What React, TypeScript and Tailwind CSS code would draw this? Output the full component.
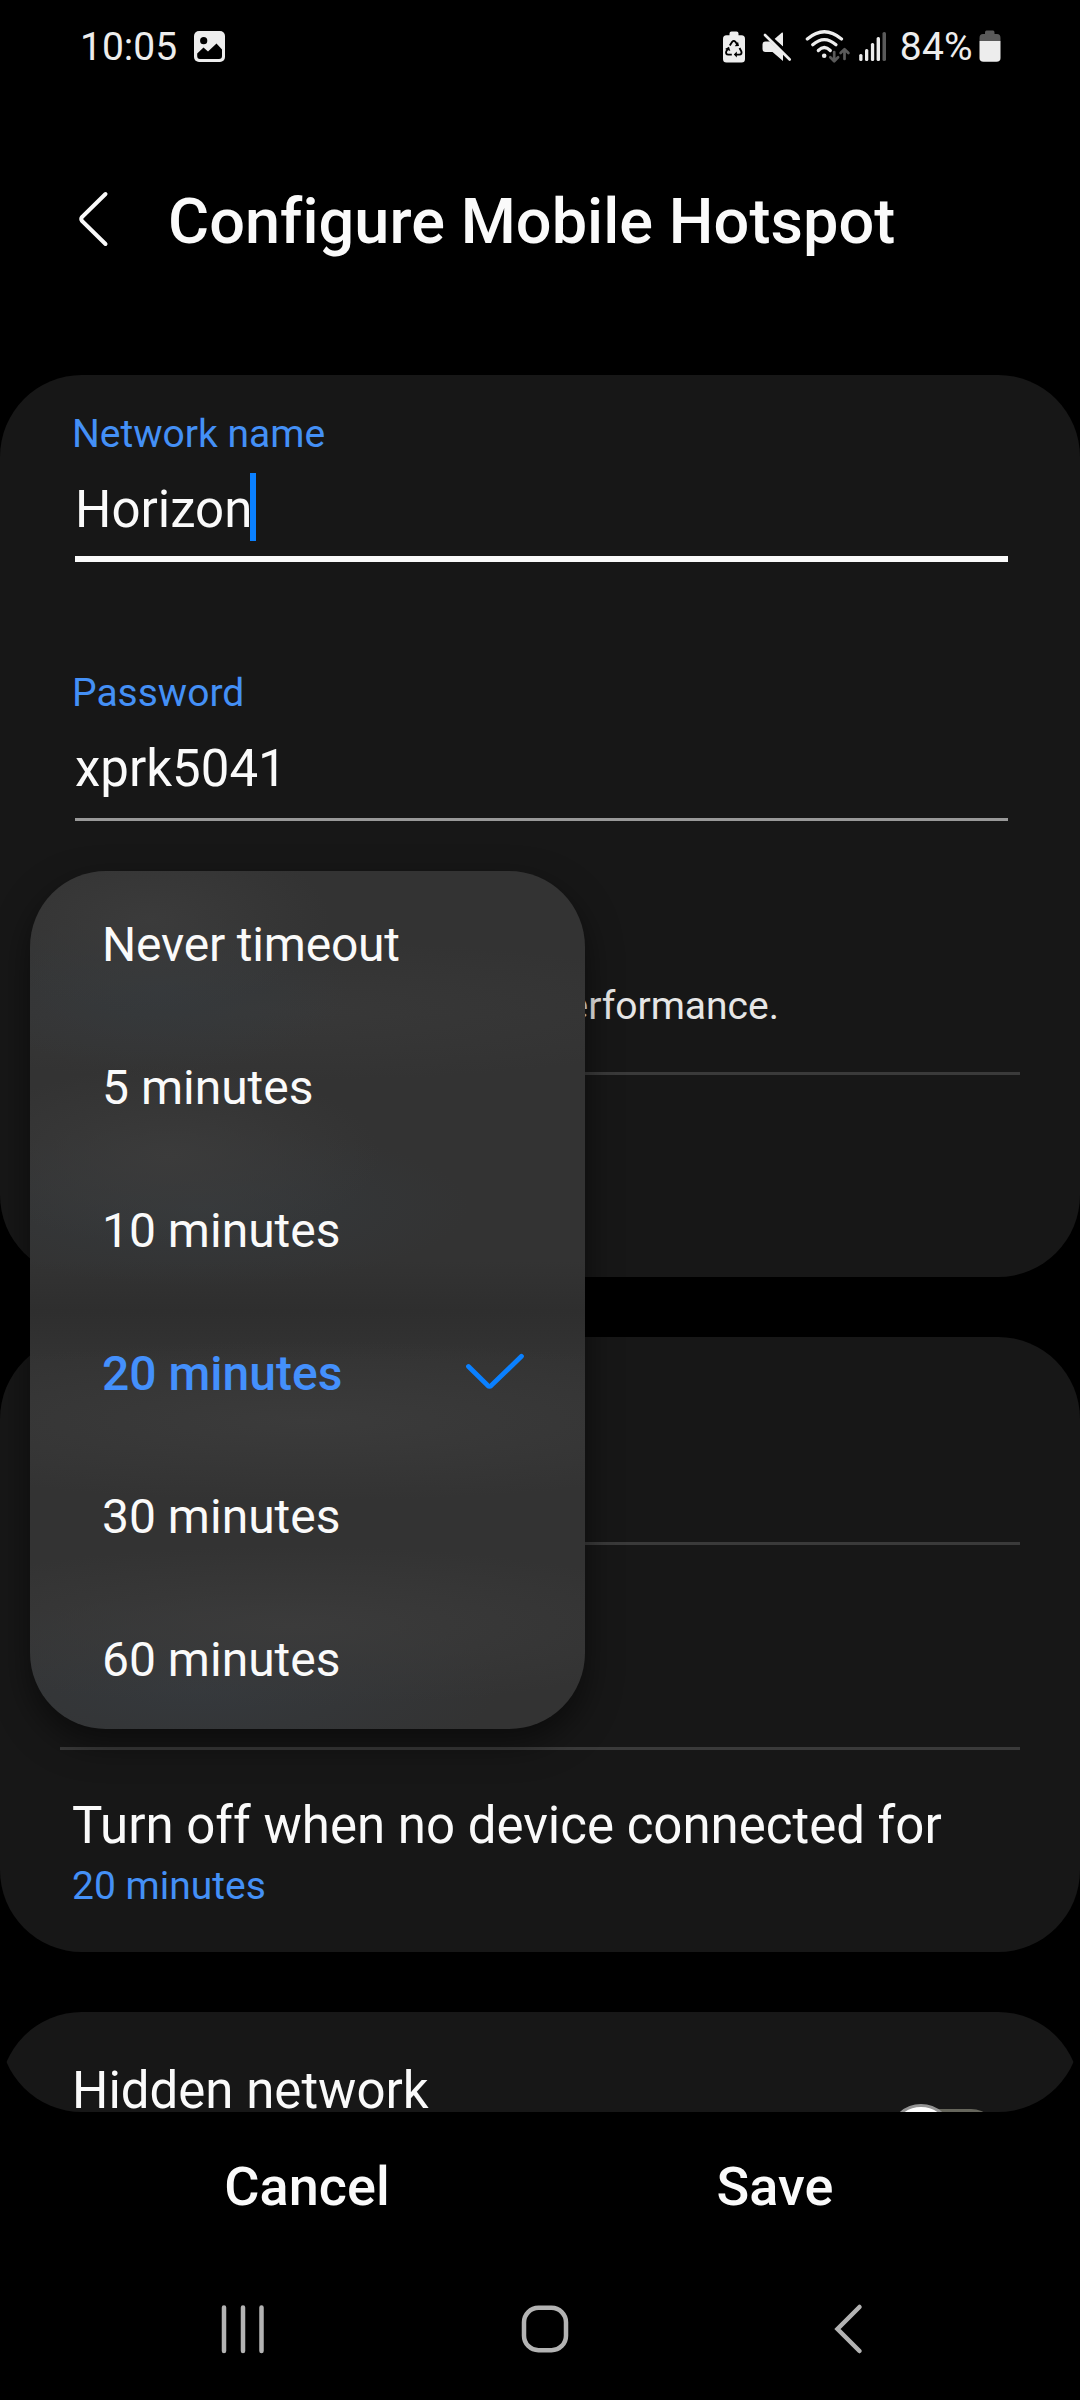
import React from "react";

const options = ["Never timeout", "5 minutes", "10 minutes", "20 minutes", "30 minutes", "60 minutes"];
const selected = "20 minutes";

function Battery() {
  return (
    <svg className="block h-[32px] w-[22px]" viewBox="0 0 22 32">
      <path d="M6 4V2.500Q6 .500 7.500 .500H14Q15.500 .500 15.500 2.500V4H18Q21.500 4 21.500 8V11H.500V8Q.500 4 4 4Z" fill="#5a5a5a" />
      <path d="M.500 11H21.500V28Q21.500 31.800 17.500 31.800H4.500Q.500 31.800 .500 28Z" fill="#ededed" />
    </svg>
  );
}

function StatusBar() {
  return (
    <header className="flex h-[92px] items-center pl-[80px] pr-[79px] text-[39px] text-[#ededed]">
      <span className="mt-[2px] w-[114px]">10:05</span>
      <svg className="h-[31px] w-[31px]" viewBox="0 0 31 31">
        <rect width="31" height="31" rx="5" fill="#ededed" />
        <circle cx="9.700" cy="9.700" r="3.600" fill="#000" />
        <path d="M3.200 22.500L9.500 16.500L14 20.500L22.500 12.500L28 18.500V25Q28 28 25 28H6Q3.200 28 3.200 25Z" fill="#000" />
      </svg>
      <svg className="ml-auto h-[44px] w-[180px]" viewBox="0 0 180 44">
        {/* battery protection */}
        <path d="M11.500 9.500Q11.500 7.500 13.500 7.500H18.500Q20.500 7.500 20.500 9.500V11.300H23.500Q27 11.300 27 15V35Q27 38.600 23.500 38.600H8.500Q5 38.600 5 35V15Q5 11.300 8.500 11.300H11.500Z" fill="#ededed" />
        <path d="M11.800 21.500L14.200 17.800Q15.800 16 17.400 17.800L19.200 20.500M21.500 24L23.300 27.300Q24.300 30.600 21.300 30.600H18M13.800 30.600H10.300Q7.300 30.600 8.300 27.300L10 24.500" fill="none" stroke="#000" strokeWidth="1.900" />
        <path d="M16.800 22.300L21 22L20 17.800ZM18.800 27.600L15.800 30.600L18.800 33.400ZM7 25L11 22.800L12.300 27Z" fill="#000" />
        {/* muted speaker */}
        <path d="M47.500 17.500H52L65 30V37L54.500 28H47.500Q44.500 28 44.500 25V20.500Q44.500 17.500 47.500 17.500Z" fill="#ededed" />
        <path d="M56.500 15L64 8.500Q65 8 65 9.500V22.500Z" fill="#ededed" />
        <path d="M48.500 9L73.500 33.500" stroke="#000" strokeWidth="3" />
        <path d="M47 11L71.700 35.500" stroke="#ededed" strokeWidth="2.700" strokeLinecap="round" />
        {/* wifi with data arrows */}
        <g fill="none" stroke="#ededed" strokeWidth="3.200" strokeLinecap="round">
          <path d="M89.300 15Q106.300 .500 123.500 15" />
          <path d="M94.700 20.800Q106.300 10.500 118 20.800" />
          <path d="M100.300 26.500Q106.300 20.500 112.300 26.500" />
        </g>
        <circle cx="106.200" cy="31.700" r="2.300" fill="#ededed" />
        <path d="M116.200 28V37M112.300 33.300L116.200 37.200L120.100 33.300M126.500 35V26M122.600 29L126.500 25.100L130.400 29" fill="none" stroke="#5a5a5a" strokeWidth="2.700" strokeLinecap="round" strokeLinejoin="round" />
        {/* signal strength */}
        <g fill="#ededed">
          <rect x="141.200" y="30" width="3.300" height="7" rx="1.500" />
          <rect x="147" y="25" width="3.300" height="12" rx="1.500" />
          <rect x="152.900" y="19" width="3.300" height="18" rx="1.500" />
          <rect x="158.600" y="13" width="3.400" height="24" rx="1.500" />
        </g>
        <rect x="164.500" y="8" width="3.500" height="29" rx="1.600" fill="#5a5a5a" />
      </svg>
      <span className="ml-[2px] mr-[6px] mt-[2px] tracking-[0.3px]">84%</span>
      <Battery />
    </header>
  );
}

function Field({ label, value, active }: { label: string; value: string; active?: boolean }) {
  return (
    <div className="h-[259px]">
      <div className="h-[46px] pl-[72px] text-[39px] leading-[46px] text-[#4490f6]">{label}</div>
      <div className="ml-[75px] flex h-[99px] w-[933px] items-start pt-[23px]">
        <span className="text-[51px] leading-[60px] text-[#fafafa]">{value}</span>
        {active && <i className="-ml-[2px] -mt-[7px] h-[68px] w-[6px] shrink-0 bg-[#0a80ff]" />}
      </div>
      {active ? (
        <div className="ml-[75px] h-[6px] w-[933px] bg-[#fafafa]" />
      ) : (
        <div className="ml-[75px] mt-[3px] h-[3px] w-[933px] bg-[#999999]" />
      )}
    </div>
  );
}

function Divider() {
  return <div className="mx-[60px] h-[3px] bg-[#3a3a3a]" />;
}

function TimeoutMenu() {
  return (
    <ul className="absolute left-[30px] top-[871px] h-[858px] w-[555px] overflow-hidden rounded-[76px] bg-[#333333] bg-[radial-gradient(ellipse_180px_90px_at_120px_50px,#3b3b3b,transparent),radial-gradient(ellipse_190px_80px_at_130px_120px,#35393c,transparent),radial-gradient(ellipse_460px_70px_at_250px_140px,#383838,transparent),radial-gradient(ellipse_210px_90px_at_140px_285px,#3b3b3b,transparent),radial-gradient(ellipse_270px_80px_at_170px_335px,#35393c,transparent),radial-gradient(ellipse_500px_80px_at_277px_550px,#3b3b3b,transparent),radial-gradient(ellipse_420px_80px_at_260px_755px,#3b3b3b,transparent),radial-gradient(ellipse_300px_90px_at_170px_815px,#35393d,transparent),linear-gradient(transparent_390px,#2e2e2e_440px,transparent_490px)] text-[48px] text-[#fafafa] shadow-[0_14px_34px_rgba(0,0,0,0.5)]">
      {options.map((option, i) => (
        <li
          key={option}
          className={
            option === selected
              ? "flex h-[143px] items-center justify-between pl-[72px] pr-[60px] font-medium leading-none text-[#4490fc]"
              : "flex h-[143px] items-center pl-[72px] leading-none"
          }
        >
          <span className={i === 0 ? "mt-[5px] tracking-[-0.2px]" : "mt-[5px]"}>{option}</span>
          {option === selected && (
            <svg className="h-[38px] w-[60px]" viewBox="0 0 60 38">
              <path d="M3.500 13.500L22.500 32.300Q24.500 34 26.500 32.300L56.500 3.300" fill="none" stroke="#0a80ff" strokeWidth="4.800" strokeLinecap="round" />
            </svg>
          )}
        </li>
      ))}
    </ul>
  );
}

export default function App() {
  return (
    <div className="relative flex h-[2400px] w-[1080px] flex-col overflow-hidden bg-black font-[Roboto,sans-serif]">
      <StatusBar />
      <div className="flex h-[283px] items-start pl-[77px] pt-[90px]">
        <svg className="mt-[9px] h-[56px] w-[32px]" viewBox="0 0 32 56">
          <path d="M28.500 3L5 26Q3.500 28 5 30L28.500 53" fill="none" stroke="#fafafa" strokeWidth="4" strokeLinecap="round" />
        </svg>
        <h1 className="ml-[59px] mt-px text-[63px] font-medium leading-[78px] tracking-[0.06px] text-[#fafafa]">Configure Mobile Hotspot</h1>
      </div>

      <main className="h-[1737px] shrink-0 overflow-hidden rounded-b-[82px]">
        <section className="h-[902px] rounded-[82px] bg-[#171717] pt-[36px]">
          <Field label="Network name" value="Horizon" active />
          <Field label="Password" value="xprk5041" />
          <div className="flex h-[143px] items-end justify-end pb-[43px] pr-[301px] text-[39px] leading-[46px] text-[#e6e6e6]">performance.</div>
          <Divider />
        </section>
        <section className="mt-[60px] h-[615px] rounded-[82px] bg-[#171717] pt-[205px]">
          <Divider />
          <div className="h-[202px]" />
          <Divider />
          <div className="h-[106px] pl-[72px] pt-[46px] text-[51px] leading-[60px] text-[#fafafa]">Turn off when no device connected for</div>
          <div className="pl-[72px] pt-[3px] text-[39px] leading-[54px] text-[#4490f6]">{selected}</div>
        </section>
        <section className="mt-[60px] flex h-[200px] items-start justify-between rounded-t-[82px] bg-[#171717] pl-[72px] pr-[82px] pt-[49px]">
          <span className="text-[51px] leading-[60px] text-[#fafafa]">Hidden network</span>
          <span className="mt-[48px] h-[54px] w-[106px] rounded-full bg-[#66665c]">
            <i className="-ml-[3px] -mt-[5px] block h-[64px] w-[64px] rounded-full border-[3px] border-[#949494] bg-white" />
          </span>
        </section>
      </main>

      <footer className="flex h-[162px] shrink-0 items-start pt-[43px] text-[54px] font-medium leading-[64px] text-[#fafafa]">
        <button className="ml-[73px] w-[468px] text-center">Cancel</button>
        <button className="w-[468px] text-center">Save</button>
      </footer>

      <nav className="flex h-[126px] shrink-0 items-start pt-[29px]">
        <svg className="ml-[218px] h-[52px] w-[50px]" viewBox="0 0 50 52">
          <path d="M6 4.500V48M25 4.500V48M43.500 4.500V48" stroke="#b3b3b3" strokeWidth="4.500" strokeLinecap="round" />
        </svg>
        <svg className="ml-[251px] h-[52px] w-[52px]" viewBox="0 0 52 52">
          <rect x="5" y="4.800" width="42" height="42.400" rx="14.500" fill="none" stroke="#b3b3b3" strokeWidth="4.500" />
        </svg>
        <svg className="ml-[262px] h-[52px] w-[34px]" viewBox="0 0 34 52">
          <path d="M26.500 4L4.500 26L26.500 48" fill="none" stroke="#b3b3b3" strokeWidth="4.500" strokeLinecap="round" />
        </svg>
      </nav>

      <TimeoutMenu />
    </div>
  );
}
